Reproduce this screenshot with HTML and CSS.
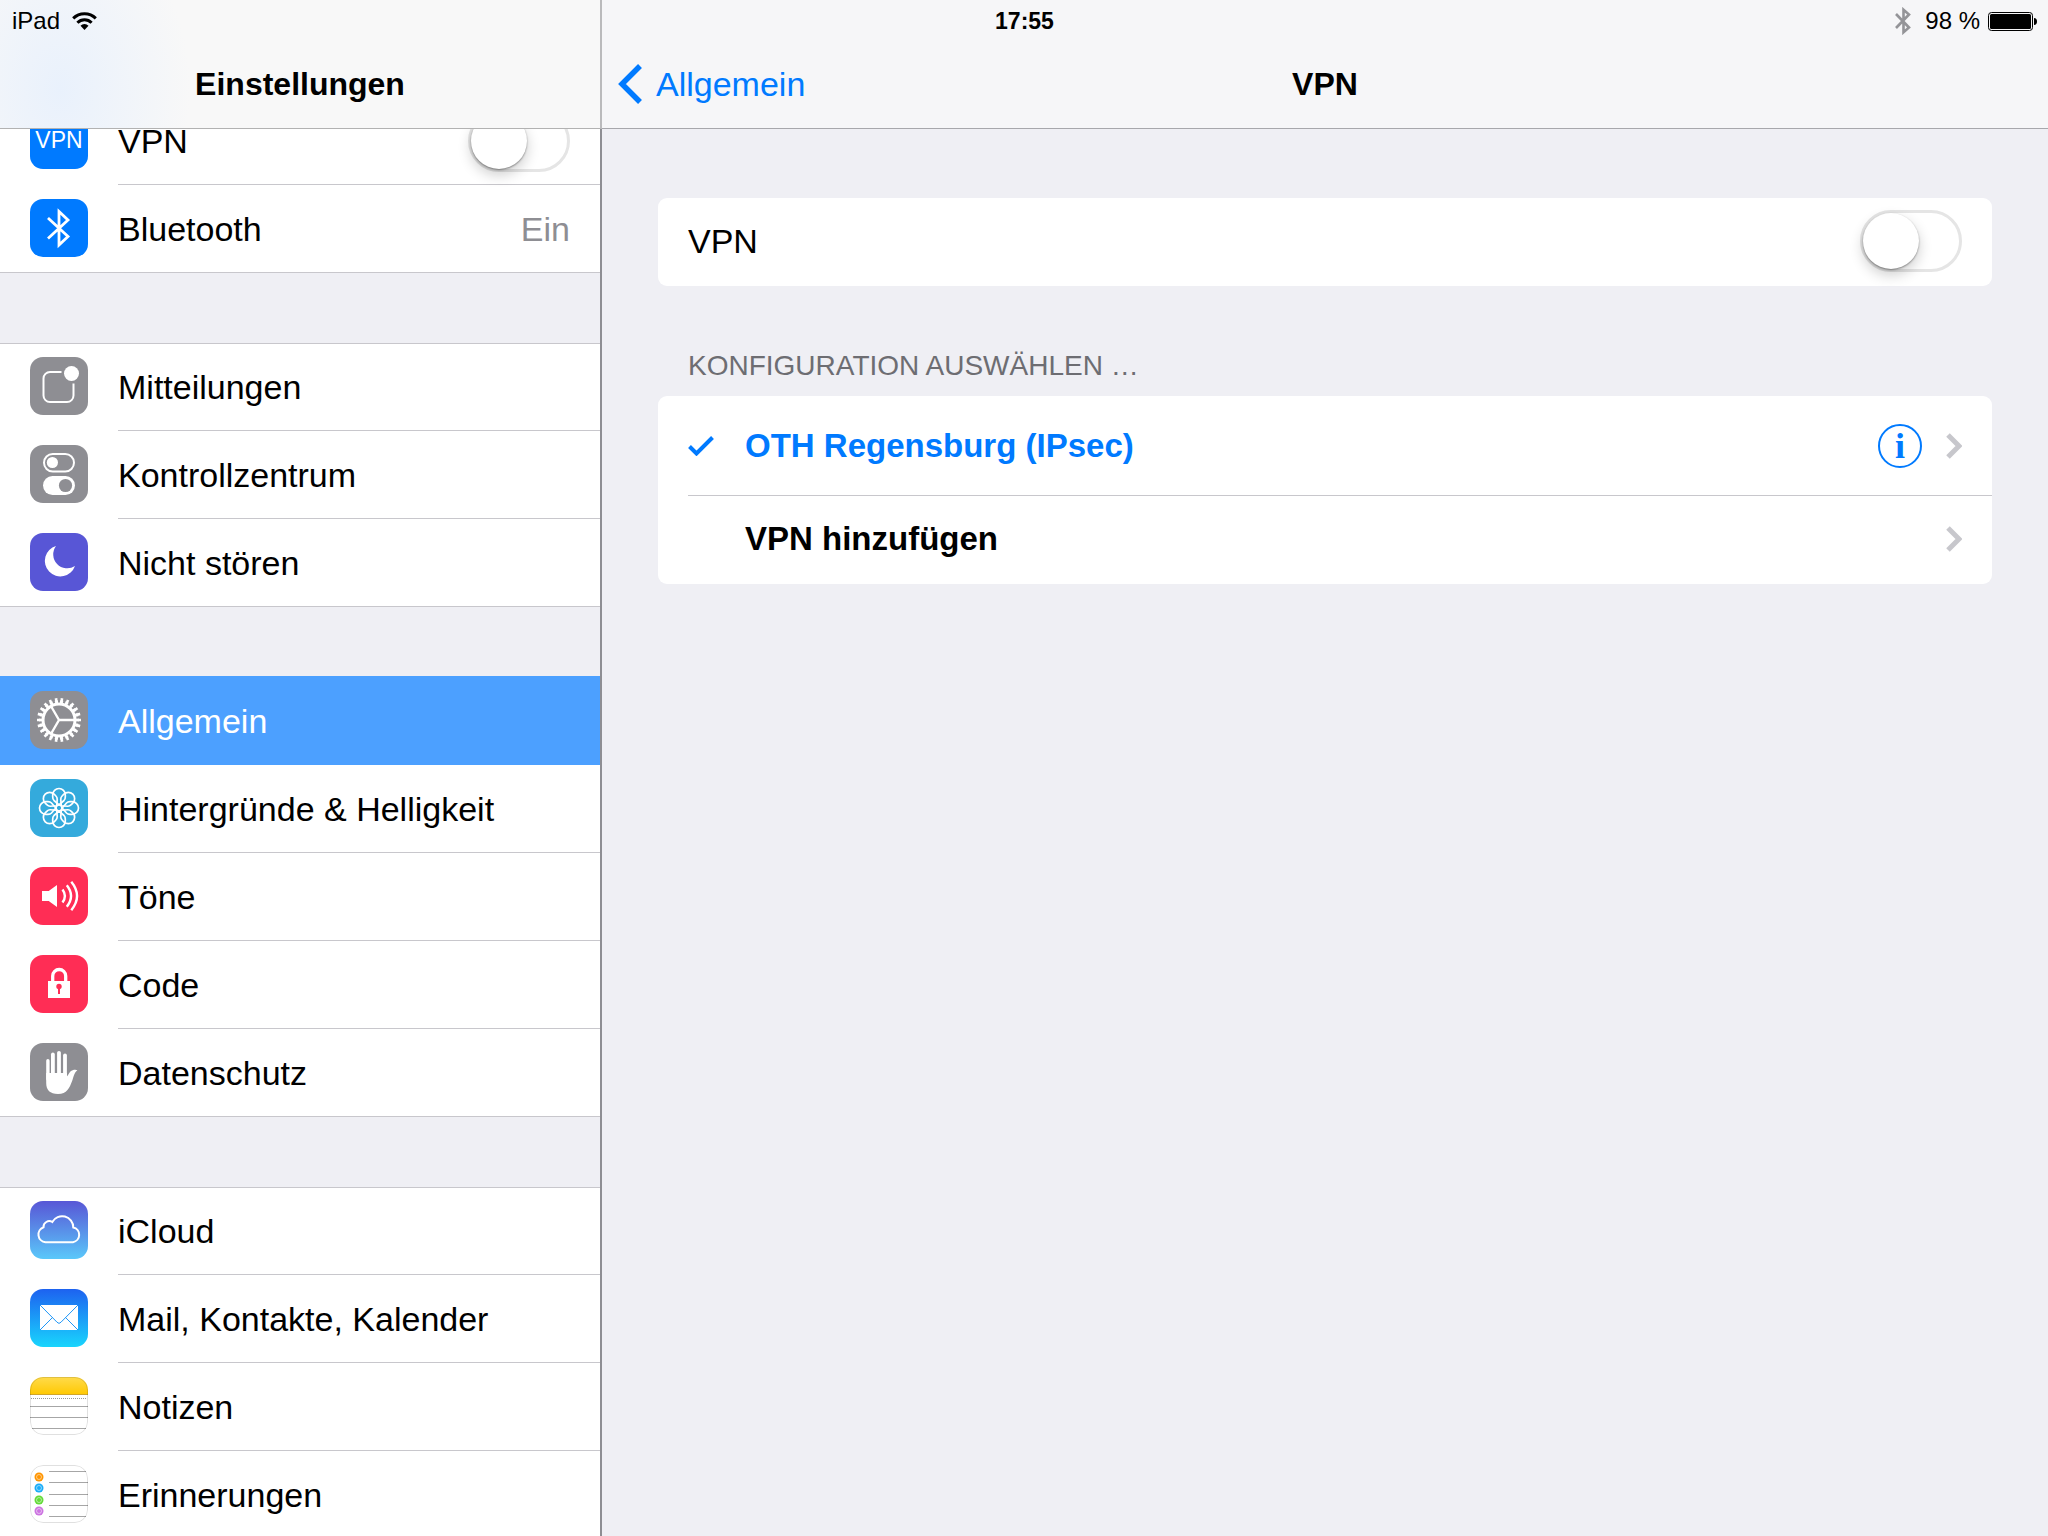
FILE: index.html
```html
<!DOCTYPE html>
<html lang="de">
<head>
<meta charset="UTF-8" />
<meta name="viewport" content="width=device-width, initial-scale=1" />
<title>Einstellungen</title>
<link rel="stylesheet" href="styles.css">
</head>
<body>

<div class="statusbar">
  <div class="status-left">
    <span>iPad</span>
    <svg width="25" height="18" viewBox="0 0 25 18" aria-hidden="true">
      <g fill="none" stroke="#000" stroke-width="3">
        <path d="M1.2 6.4a16 16 0 0 1 22.6 0" />
        <path d="M5.4 10.7a10 10 0 0 1 14.2 0" />
      </g>
      <path d="M12.5 18l-4-4.2a5.6 5.6 0 0 1 8 0z" />
    </svg>
  </div>
  <time class="status-time">17:55</time>
  <div class="status-right">
    <svg class="status-bt" width="16" height="28" viewBox="0 0 16 28" aria-hidden="true">
      <path d="M1 7l13 13.500-5.500 4.800V2.700l5.500 4.800L1 21" fill="none" stroke="#949498" stroke-width="2.600" />
    </svg>
    <span>98 %</span>
    <svg width="49" height="19" viewBox="0 0 49 19" aria-hidden="true">
      <rect x=".5" y=".5" width="44" height="18" rx="3" fill="none" stroke="#000" />
      <rect x="2" y="2" width="41" height="15" rx="1.5" />
      <path d="M46 6c2 0 3 1.500 3 3.500s-1 3.500-3 3.500z" />
    </svg>
  </div>
</div>

<div class="split">

  <aside class="sidebar">
    <header class="navbar navbar-side">
      <h1>Einstellungen</h1>
    </header>

    <nav class="side-list">
      <div class="group">
        <div class="row">
          <span class="icon blue icon-text" aria-hidden="true">VPN</span>
          <div class="row-body">
            <label for="side-vpn">VPN</label>
            <input type="checkbox" class="switch" id="side-vpn" />
          </div>
        </div>
        <a class="row" href="#bluetooth">
          <svg class="icon blue" viewBox="0 0 58 58" aria-hidden="true">
            <path d="M18 19L38 37.500 29 46V12.500L38 21 18 39.500" fill="none" stroke="#fff" stroke-width="2.800" />
          </svg>
          <div class="row-body"><span>Bluetooth</span><span class="value">Ein</span></div>
        </a>
      </div>

      <div class="group">
        <a class="row" href="#mitteilungen">
          <svg class="icon gray" viewBox="0 0 58 58" aria-hidden="true">
            <path d="M31.500 15H20a6.500 6.500 0 0 0-6.500 6.500v17A6.500 6.500 0 0 0 20 45h17a6.500 6.500 0 0 0 6.500-6.500v-12" fill="none" stroke="#fff" stroke-width="2" />
            <circle cx="41.500" cy="16.500" r="7.500" fill="#fff" />
          </svg>
          <div class="row-body">Mitteilungen</div>
        </a>
        <a class="row" href="#kontrollzentrum">
          <svg class="icon gray" viewBox="0 0 58 58" aria-hidden="true">
            <rect x="14" y="9" width="30" height="17.500" rx="8.750" fill="none" stroke="#fff" stroke-width="2" />
            <circle cx="22.400" cy="17.500" r="5.600" fill="#fff" />
            <rect x="13" y="31" width="32" height="19" rx="9.500" fill="#fff" />
            <circle cx="35.500" cy="40.500" r="6.600" fill="#8e8e93" />
          </svg>
          <div class="row-body">Kontrollzentrum</div>
        </a>
        <a class="row" href="#nicht-stoeren">
          <svg class="icon purple" viewBox="0 0 58 58" aria-hidden="true">
            <path d="M26 13A15.500 15.500 0 1 0 45 33 14 14 0 0 1 26 13z" fill="#fff" />
          </svg>
          <div class="row-body">Nicht stören</div>
        </a>
      </div>

      <div class="group">
        <a class="row selected" href="#allgemein" aria-current="page">
          <svg class="icon gray" viewBox="0 0 58 58" aria-hidden="true">
            <g fill="none" stroke="#fff">
              <circle cx="29" cy="29" r="16" stroke-width="3" />
              <circle cx="29" cy="29" r="18.300" stroke-width="3" pathLength="22" stroke-dasharray=".6 .4" stroke-dashoffset=".3" />
              <circle cx="29" cy="29" r="20.500" stroke-width="3" pathLength="22" stroke-dasharray=".44 .56" stroke-dashoffset=".22" />
              <path d="M29 29h15M29 29l-7.500-13M29 29l-7.500 13" stroke-width="2.400" />
            </g>
          </svg>
          <div class="row-body">Allgemein</div>
        </a>
        <a class="row" href="#hintergruende">
          <svg class="icon sky" viewBox="0 0 58 58" aria-hidden="true">
            <defs>
              <path id="petal" d="M29 25.800L24 21.500q-1.300-1.200-1.300-3.500v-2.200a6.300 6.300 0 0 1 12.600 0V18q0 2.300-1.300 3.500z" />
            </defs>
            <g fill="none" stroke="#fff" stroke-width="1.700">
              <circle cx="29" cy="29" r="3" />
              <use href="#petal" />
              <use href="#petal" transform="rotate(45 29 29)" />
              <use href="#petal" transform="rotate(90 29 29)" />
              <use href="#petal" transform="rotate(135 29 29)" />
              <use href="#petal" transform="rotate(180 29 29)" />
              <use href="#petal" transform="rotate(225 29 29)" />
              <use href="#petal" transform="rotate(270 29 29)" />
              <use href="#petal" transform="rotate(315 29 29)" />
            </g>
          </svg>
          <div class="row-body">Hintergründe &amp; Helligkeit</div>
        </a>
        <a class="row" href="#toene">
          <svg class="icon red" viewBox="0 0 58 58" aria-hidden="true">
            <path d="M12 24h6.700L27 18v22l-8.300-6H12z" fill="#fff" />
            <g fill="none" stroke="#fff" stroke-width="2.400">
              <path d="M32.500 22.500q4.800 6.500 0 13" />
              <path d="M36.800 18.300q8.500 10.700 0 21.400" />
              <path d="M41.300 14.800q11.500 14.200 0 28.400" />
            </g>
          </svg>
          <div class="row-body">Töne</div>
        </a>
        <a class="row" href="#code">
          <svg class="icon red" viewBox="0 0 58 58" aria-hidden="true">
            <path d="M22.700 27v-6a6.500 6.500 0 0 1 13 0v6" fill="none" stroke="#fff" stroke-width="3.300" />
            <path d="M18 26h22v17H18z" fill="#fff" />
            <circle cx="29" cy="31.500" r="2.700" fill="#ff2d55" />
            <path d="M28 32h2v7h-2z" fill="#ff2d55" />
          </svg>
          <div class="row-body">Code</div>
        </a>
        <a class="row" href="#datenschutz">
          <svg class="icon gray" viewBox="0 0 58 58" aria-hidden="true">
            <g stroke="#fff" stroke-width="3.800" stroke-linecap="round">
              <path d="M17.900 17.800V36" stroke-width="3.400" />
              <path d="M22.900 11.500V36" />
              <path d="M29 9.800V36" />
              <path d="M35 12.500V36" />
            </g>
            <path d="M16.200 30h20.700v3.500c1.500-1.500 2-3.500 3.500-5 2-1.800 5.500-2.200 7-1.200-3.300 2.500-3.600 6-5 10C39.500 45 37 51 28 51c-8 0-11.800-4-11.800-11z" fill="#fff" />
          </svg>
          <div class="row-body">Datenschutz</div>
        </a>
      </div>

      <div class="group">
        <a class="row" href="#icloud">
          <svg class="icon icloud" viewBox="0 0 58 58" aria-hidden="true">
            <path d="M15.500 41.200A7.700 7.700 0 0 1 13.500 26.300 5.800 5.800 0 0 1 22.300 21 11.200 11.200 0 0 1 43.300 26.500 7.500 7.500 0 0 1 43 41.200z" fill="none" stroke="#fff" stroke-width="2" />
          </svg>
          <div class="row-body">iCloud</div>
        </a>
        <a class="row" href="#mail">
          <svg class="icon mail" viewBox="0 0 58 58" aria-hidden="true">
            <path d="M10 16h38v25H10z" fill="#fff" />
            <path d="M10 16l17 17.200q2 2.400 4 0L48 16M10 41l12.500-12.500M48 41L35.500 28.500" fill="none" stroke="#1e96f7" />
          </svg>
          <div class="row-body">Mail, Kontakte, Kalender</div>
        </a>
        <a class="row" href="#notizen">
          <svg class="icon paper" viewBox="0 0 58 58" aria-hidden="true">
            <defs>
              <linearGradient id="yellow" x2="0" y2="1">
                <stop stop-color="#ffdb4c" />
                <stop offset="1" stop-color="#ffc800" />
              </linearGradient>
            </defs>
            <path d="M0 0h58v18H0z" fill="url(#yellow)" />
            <path d="M0 17.500h58" stroke="#d0a52a" />
            <path d="M1 21.500h56" stroke="#999" stroke-dasharray="1 1" />
            <path d="M0 29.500h58M0 40.500h58M2 51.500h54" stroke="#a6a6a6" />
            <rect x=".5" y=".5" width="57" height="57" rx="12.500" fill="none" stroke="#000" stroke-opacity=".12" />
          </svg>
          <div class="row-body">Notizen</div>
        </a>
        <a class="row" href="#erinnerungen">
          <svg class="icon paper" viewBox="0 0 58 58" aria-hidden="true">
            <path d="M19 6.500h37M19 17.500h39M19 29.500h39M19 40.500h39M19 51.500h37" stroke="#a6a6a6" />
            <g stroke="#fff" stroke-opacity=".5">
              <g fill="#ff9500"><circle cx="9" cy="12" r="4.500" stroke="none" /><circle cx="9" cy="12" r="2.500" /></g>
              <g fill="#1badf8"><circle cx="9" cy="23" r="4.500" stroke="none" /><circle cx="9" cy="23" r="2.500" /></g>
              <g fill="#63da38"><circle cx="9" cy="35" r="4.500" stroke="none" /><circle cx="9" cy="35" r="2.500" /></g>
              <g fill="#cc73e1"><circle cx="9" cy="46" r="4.500" stroke="none" /><circle cx="9" cy="46" r="2.500" /></g>
            </g>
            <rect x=".5" y=".5" width="57" height="57" rx="12.500" fill="none" stroke="#000" stroke-opacity=".12" />
          </svg>
          <div class="row-body">Erinnerungen</div>
        </a>
      </div>
    </nav>
  </aside>

  <main class="detail">
    <header class="navbar">
      <a class="back" href="#allgemein">
        <svg width="24" height="40" viewBox="0 0 24 40" aria-hidden="true">
          <path d="M22 2L4 20l18 18" fill="none" stroke="#007aff" stroke-width="5.500" />
        </svg>
        <span>Allgemein</span>
      </a>
      <h2>VPN</h2>
      <span></span>
    </header>

    <div class="detail-content">
      <div class="card">
        <div class="card-row">
          <label class="grow" for="vpn">VPN</label>
          <input type="checkbox" class="switch" id="vpn" />
        </div>
      </div>

      <h3>KONFIGURATION AUSWÄHLEN …</h3>
      <div class="card">
        <div class="card-row tall">
          <button type="button" class="config active grow">
            <svg width="26" height="20" viewBox="0 0 26 20" aria-hidden="true">
              <path d="M1.500 10.500l7 7L24.500 1.500" fill="none" stroke="#007aff" stroke-width="4" />
            </svg>
            <span>OTH Regensburg (IPsec)</span>
          </button>
          <button type="button" class="info" aria-label="Info">i</button>
          <svg class="chevron" viewBox="0 0 16 26" aria-hidden="true"><path d="M2 2l11 11L2 24" /></svg>
        </div>
        <a class="card-row" href="#vpn-hinzufuegen">
          <span class="config indent grow">VPN hinzufügen</span>
          <svg class="chevron" viewBox="0 0 16 26" aria-hidden="true"><path d="M2 2l11 11L2 24" /></svg>
        </a>
      </div>
    </div>
  </main>

</div>

</body>
</html>
```

FILE: styles.css
```css
* {
  box-sizing: border-box;
}
body {
  margin: 0;
  height: 100vh;
  overflow: hidden;
  background: #efeff4;
  color: #000;
  font-family: "Liberation Sans", Arial, sans-serif;
  font-size: 34px;
}
a {
  color: inherit;
  text-decoration: none;
}
button {
  padding: 0;
  border: none;
  background: none;
  font: inherit;
  text-align: left;
  cursor: pointer;
}
h1, h2, h3 {
  margin: 0;
}
svg {
  display: block;
  flex: none;
}

/* status bar lies over both nav bars */
.statusbar {
  position: absolute;
  top: 0;
  left: 0;
  right: 0;
  z-index: 1;
  height: 42px;
  padding: 0 11px 0 12px;
  display: grid;
  grid-template-columns: 1fr auto 1fr;
  align-items: center;
  font-size: 24px;
}
.status-left,
.status-right {
  display: flex;
  align-items: center;
  gap: 12px;
}
.status-right {
  justify-content: flex-end;
  gap: 8px;
}
.status-bt {
  margin-right: 6px;
}
.status-time {
  font-size: 23px;
  font-weight: bold;
}

.split {
  display: flex;
  height: 100%;
}
.sidebar {
  flex: none;
  width: 602px;
  display: flex;
  flex-direction: column;
}
.detail {
  flex: 1;
}

.navbar {
  flex: none;
  height: 129px;
  padding: 40px 16px 0;
  display: grid;
  grid-template-columns: 1fr auto 1fr;
  align-items: center;
  background: #f6f6f8;
  border-bottom: 1px solid #a7a7ac;
}
.navbar-side {
  display: block;
  padding: 40px 0 0;
  /* icons scrolled under the bar shine through */
  background: radial-gradient(ellipse 130px 180px at 60px 90px, #e9f1fc, #f8f8f8);
  border-right: 2px solid #bababc;
  border-bottom-color: #b2b2b2;
  line-height: 88px;
}
h1, h2 {
  font-size: 32px;
  text-align: center;
}
.back {
  display: flex;
  align-items: center;
  gap: 14px;
  color: #007aff;
}

.side-list {
  flex: 1;
  overflow: hidden;
  border-right: 2px solid #8e8e93;
}
.group {
  margin-bottom: 70px;
  background: #fff;
  box-shadow: inset 0 1px #c8c7cc, inset 0 -1px #c8c7cc;
}
/* list is scrolled a little */
.group:first-child {
  margin-top: -32px;
}
.row {
  display: flex;
  height: 88px;
  padding-left: 30px;
  gap: 30px;
}
.row-body {
  flex: 1;
  display: flex;
  align-items: center;
  justify-content: space-between;
  padding-top: 1px;
  padding-right: 30px;
  border-bottom: 1px solid #c8c7cc;
}
.row:last-child .row-body,
.selected .row-body {
  border-color: transparent;
}
.selected {
  background: #4ca0ff;
  box-shadow: 0 -1px #4ca0ff;
  color: #fff;
}
.value {
  color: #8e8e93;
}

.icon {
  flex: none;
  width: 58px;
  height: 58px;
  margin-top: 14px;
  border-radius: 13px;
}
.icon-text {
  color: #fff;
  font-size: 23px;
  line-height: 58px;
  text-align: center;
}
.blue { background: #007aff; }
.gray { background: #8e8e93; }
.purple { background: #5856d6; }
.sky { background: #34aadc; }
.red { background: #ff2d55; }
.icloud { background: linear-gradient(#5856d6, #5ac8fa); }
.mail { background: linear-gradient(#1d62f0, #19d5fd); }
.paper { background: #fff; }

.switch {
  appearance: none;
  flex: none;
  position: relative;
  width: 102px;
  height: 62px;
  margin: 0;
  border: 3px solid #e5e5e5;
  border-radius: 31px;
  background: #fff;
  cursor: pointer;
}
.switch::before {
  content: "";
  position: absolute;
  top: 0;
  left: 0;
  width: 56px;
  height: 56px;
  border-radius: 50%;
  background: #fff;
  box-shadow: 0 1px 2px rgba(0,0,0,0.4), 0 6px 14px rgba(0,0,0,0.2);
}
.switch:checked {
  background: #4cd964;
  border-color: #4cd964;
}
.switch:checked::before {
  left: 40px;
}

.detail-content {
  padding: 69px 56px;
}
.card {
  background: #fff;
  border-radius: 9px;
}
.card-row {
  display: flex;
  align-items: center;
  height: 88px;
  margin-left: 30px;
  padding-right: 30px;
  padding-bottom: 2px;
}
.tall {
  height: 100px;
  padding-bottom: 0;
  border-bottom: 1px solid #c8c7cc;
}
.grow {
  flex: 1;
}
h3 {
  padding: 64px 30px 14px;
  color: #6d6d72;
  font-size: 28px;
  font-weight: normal;
  line-height: 32px;
}
.config {
  display: flex;
  align-items: center;
  gap: 31px;
  font-size: 33px;
  font-weight: bold;
}
.active {
  color: #007aff;
}
.indent {
  padding-left: 57px;
}
.info {
  width: 44px;
  height: 44px;
  margin-right: 24px;
  border: 2px solid #007aff;
  border-radius: 50%;
  color: #007aff;
  font-family: "Liberation Serif", serif;
  font-size: 36px;
  font-weight: bold;
  line-height: 38px;
  text-align: center;
}
.chevron {
  width: 16px;
  height: 26px;
  fill: none;
  stroke: #c7c7cc;
  stroke-width: 5;
}
```
